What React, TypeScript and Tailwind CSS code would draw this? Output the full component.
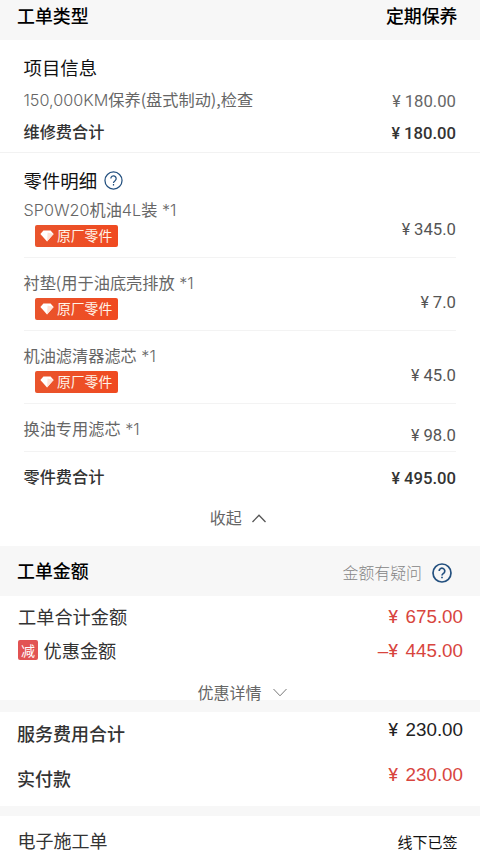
import React from 'react';
import clsx from 'clsx';

interface Part {
  name: React.ReactNode;
  price: string;
  genuine: boolean;
}

const Latin: React.FC<{ children: React.ReactNode }> = ({ children }) => (
  <span className="font-['Inter'] text-[16.2px] leading-none font-light">{children}</span>
);

const parts: Part[] = [
  { name: <><Latin>SP0W20</Latin>机油<Latin>4L</Latin>装<Latin> *1</Latin></>, price: '345.0', genuine: true },
  { name: <>衬垫(用于油底壳排放<Latin> *1</Latin></>, price: '7.0', genuine: true },
  { name: <>机油滤清器滤芯<Latin> *1</Latin></>, price: '45.0', genuine: true },
  { name: <>换油专用滤芯<Latin> *1</Latin></>, price: '98.0', genuine: false },
];

// Narrow amounts used inside the detail lists
const Price: React.FC<{ value: string; className?: string }> = ({ value, className }) => (
  <span className={clsx("flex items-baseline font-['Roboto'] text-[16.7px] leading-6", className)}>
    <span className="mr-[4px] text-[16px]">¥</span>
    {value}
  </span>
);

// Wide amounts used in the totals
const Amount: React.FC<{ value: string; minus?: boolean; className?: string }> = ({ value, minus, className }) => (
  <span className={clsx("flex items-baseline font-['Liberation_Sans',sans-serif] text-[18.8px] leading-6", className)}>
    {minus && <span>–</span>}
    <span className="mr-[7.5px] font-['Roboto'] text-[18.8px]">¥</span>
    {value}
  </span>
);

const Help: React.FC<{ size: number; strokeWidth: number }> = ({ size, strokeWidth }) => (
  <svg width={size} height={size} viewBox="0 0 20 20" fill="none" stroke="#23507f" strokeWidth={strokeWidth}>
    <circle cx="10" cy="10" r="9" />
    <path d="M7.2 8a2.8 2.8 0 1 1 4.6 2.1c-1 .8-1.8 1.2-1.8 2.5" />
    <path d="M10 13.7v1.6" />
  </svg>
);

const Tag = () => (
  <div className="ml-[11px] flex h-[22px] w-[83px] items-center rounded-[2px] bg-linear-to-r from-[#e9542c] to-[#f04a20] pl-[5.5px] text-[13.8px] leading-none text-[#fff3e8]">
    <svg width="14" height="12" viewBox="0 0 14 12" className="mr-[3px]">
      <path d="M3.4.6h7.2L13.6 4 7 11.6.4 4z" fill="#fff" />
      <path d="M7.6 2.6 13.6 4 7 11.6z" fill="#ffe3d8" />
    </svg>
    <span className="pb-px">原厂零件</span>
  </div>
);

const App: React.FC = () => {
  return (
    <div className="h-[854px] w-[480px] overflow-hidden bg-white font-['Noto_Sans_CJK_SC',sans-serif] text-[#333]">
      <header className="flex h-10 items-center justify-between bg-[#f7f7f7] pr-[22.5px] pb-[10px] pl-[17px] text-[17.9px] font-medium text-black">
        <span>工单类型</span>
        <span>定期保养</span>
      </header>

      {/* 项目信息 */}
      <section className="h-[113px] border-b border-[#f2f2f2] pt-[15px] pr-6 pl-[23.5px]">
        <h2 className="text-[18.4px] leading-6 text-[#111]">项目信息</h2>
        <div className="mt-2 flex h-6 justify-between">
          <span className="text-[16.2px] leading-6 text-[#666]">
            <Latin>150,000KM</Latin>保养(盘式制动),检查
          </span>
          <Price value="180.00" className="pt-[3px] text-[#666]" />
        </div>
        <div className="mt-2 flex h-6 justify-between">
          <span className="text-[16.2px] leading-6 font-medium">维修费合计</span>
          <Price value="180.00" className="pt-[3px] font-medium" />
        </div>
      </section>

      {/* 零件明细 */}
      <section className="h-[393px] pt-[15px] pr-6 pl-[23.5px]">
        <h2 className="flex h-6 items-center gap-[7px] text-[18.4px] leading-6 text-[#111]">
          零件明细
          <Help size={19} strokeWidth={1.3} />
        </h2>
        {parts.map((part, idx) => (
          <div
            key={idx}
            className={clsx(
              'flex justify-between border-b border-[#f3f3f3]',
              idx === 0 ? 'h-[66px] pt-[5px]' : part.genuine ? 'h-[73px] pt-3' : 'h-12 pt-3'
            )}
          >
            <div>
              <p className="h-6 text-[16.2px] leading-6 text-[#666]">{part.name}</p>
              {part.genuine && <div className="mt-1"><Tag /></div>}
            </div>
            <Price value={part.price} className={clsx('text-[#555]', idx === 0 ? 'pt-[21px]' : part.genuine ? 'pt-[21px]' : 'pt-2')} />
          </div>
        ))}
        <div className="mt-3 flex h-6 justify-between">
          <span className="text-[16.2px] leading-6 font-medium">零件费合计</span>
          <Price value="495.00" className="pt-[3px] font-medium" />
        </div>
        <div className="mt-[17px] flex h-6 items-center justify-center pr-[4px] text-[16px] text-[#666]">
          收起
          <svg width="14" height="9" viewBox="0 0 14 9" className="mt-[2px] ml-[10px]" fill="none" stroke="#555" strokeWidth="1.3">
            <path d="M.5 8 7 1.2 13.5 8" />
          </svg>
        </div>
      </section>

      {/* 工单金额 */}
      <div className="flex h-[50px] items-center justify-between bg-[#f7f7f7] pr-7 pl-[17px]">
        <span className="pb-[2px] text-[17.9px] font-medium text-black">工单金额</span>
        <span className="flex items-center gap-[10px] pt-1 text-[15.9px] font-light text-[#858585]">
          金额有疑问
          <Help size={20} strokeWidth={1.7} />
        </span>
      </div>
      <section className="h-[104px] pt-2 pr-[17px] pl-[18px]">
        <div className="flex h-6 justify-between text-[18.2px] leading-6">
          <span>工单合计金额</span>
          <Amount value="675.00" className="pt-px text-[#d8453e]" />
        </div>
        <div className="mt-[10px] flex h-6 justify-between text-[18.2px] leading-6">
          <span className="flex items-center">
            <i className="mr-[5.5px] flex h-5 w-5 items-center justify-center rounded-[2px] bg-[#e25353] pb-px text-[14px] leading-none text-white not-italic">减</i>
            优惠金额
          </span>
          <Amount value="445.00" minus className="pt-px text-[#d8453e]" />
        </div>
        <div className="mt-[18px] flex h-6 items-center justify-center pl-[3px] text-[16px] text-[#666]">
          优惠详情
          <svg width="14" height="9" viewBox="0 0 14 9" className="ml-[11px]" fill="none" stroke="#777" strokeWidth="1">
            <path d="M.5 1 7 7.8 13.5 1" />
          </svg>
        </div>
      </section>

      <div className="h-3 bg-[#f7f7f7]" />
      <section className="h-[94px] pt-[6px] pr-[17px] pl-[17px] text-[18px] leading-6">
        <div className="flex h-[45px] justify-between">
          <span className="pt-[3px] font-medium">服务费用合计</span>
          <Amount value="230.00" className="text-[#222]" />
        </div>
        <div className="flex h-6 justify-between">
          <span className="pt-[3px] font-medium">实付款</span>
          <Amount value="230.00" className="text-[#d8453e]" />
        </div>
      </section>

      <div className="h-[10px] bg-[#f7f7f7]" />
      <footer className="flex justify-between pt-3 pr-[22.5px] pl-[17.5px] leading-6">
        <span className="text-[18px]">电子施工单</span>
        <span className="pt-[2px] text-[15px] text-[#111]">线下已签</span>
      </footer>
    </div>
  );
};

export default App;
